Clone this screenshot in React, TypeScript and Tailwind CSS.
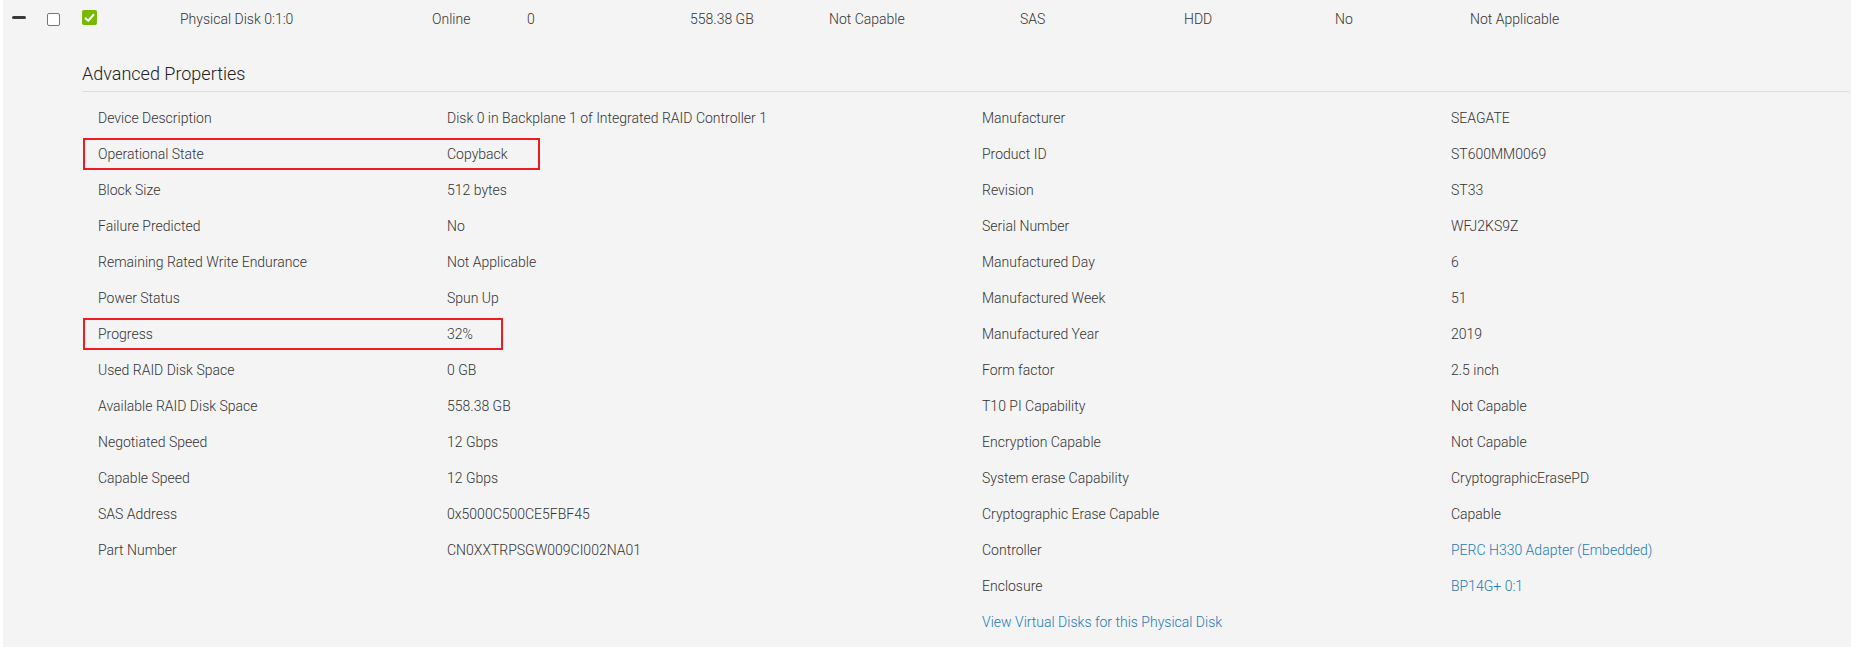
const leftRows = [
  ['Device Description', 'Disk 0 in Backplane 1 of Integrated RAID Controller 1'],
  ['Operational State', 'Copyback'],
  ['Block Size', '512 bytes'],
  ['Failure Predicted', 'No'],
  ['Remaining Rated Write Endurance', 'Not Applicable'],
  ['Power Status', 'Spun Up'],
  ['Progress', '32%'],
  ['Used RAID Disk Space', '0 GB'],
  ['Available RAID Disk Space', '558.38 GB'],
  ['Negotiated Speed', '12 Gbps'],
  ['Capable Speed', '12 Gbps'],
  ['SAS Address', '0x5000C500CE5FBF45'],
  ['Part Number', 'CN0XXTRPSGW009CI002NA01'],
];

const rightRows = [
  ['Manufacturer', 'SEAGATE'],
  ['Product ID', 'ST600MM0069'],
  ['Revision', 'ST33'],
  ['Serial Number', 'WFJ2KS9Z'],
  ['Manufactured Day', '6'],
  ['Manufactured Week', '51'],
  ['Manufactured Year', '2019'],
  ['Form factor', '2.5 inch'],
  ['T10 PI Capability', 'Not Capable'],
  ['Encryption Capable', 'Not Capable'],
  ['System erase Capability', 'CryptographicErasePD'],
  ['Cryptographic Erase Capable', 'Capable'],
];

function Row({ label, value, link, labelClass, boxClass }: { label: string; value?: string; link?: boolean; labelClass: string; boxClass?: string }) {
  return (
    <div className="relative flex h-9 items-center">
      <div className={`shrink-0 pl-4 ${labelClass}`}>{label}</div>
      <div className={link ? 'text-[#1f7ab8]' : ''}>{value}</div>
      {boxClass && <div className={`absolute top-[2px] left-[1px] h-[32px] border-2 border-[#ed1c24] ${boxClass}`} />}
    </div>
  );
}

export default function App() {
  return (
    <div className="h-[647px] w-[1851px] overflow-hidden bg-white pl-[3px] font-['Roboto',sans-serif] text-[14px] font-light text-[#333333]">
      <div className="h-full bg-[#f4f4f4]">
        <div className="flex h-[38px] items-center">
          <div className="mb-[3px] ml-[9px] h-[3px] w-[14px] rounded-sm bg-[#3a3a3a]" />
          <div className="ml-[21px] h-[13px] w-[13px] rounded-[2px] border border-[#777777] bg-white" />
          <div className="mb-[3px] ml-[22px] flex h-[15px] w-[15px] items-center justify-center rounded-[2px] bg-[#76b900]">
            <svg viewBox="0 0 16 16" className="h-[13px] w-[13px]" fill="none" stroke="white" strokeWidth="2.6">
              <path d="M2.5 8.5 6.5 12 13.5 4" />
            </svg>
          </div>
          <div className="ml-[83px] w-[252px]">Physical Disk 0:1:0</div>
          <div className="w-[95px]">Online</div>
          <div className="w-[163px]">0</div>
          <div className="w-[139px]">558.38 GB</div>
          <div className="w-[191px]">Not Capable</div>
          <div className="w-[164px]">SAS</div>
          <div className="w-[151px]">HDD</div>
          <div className="w-[135px]">No</div>
          <div>Not Applicable</div>
        </div>
        <div className="mt-[23px] ml-[79px] mr-[2px]">
          <div className="border-b border-[#dddddd] pb-[4px] text-[18px] leading-[26px] text-[#222222]">Advanced Properties</div>
          <div className="mt-[8px] flex">
            <div className="w-[884px]">
              {leftRows.map(([label, value]) => (
                <Row
                  key={label}
                  label={label}
                  value={value}
                  labelClass="w-[365px]"
                  boxClass={label === 'Operational State' ? 'w-[457px]' : label === 'Progress' ? 'w-[420px]' : undefined}
                />
              ))}
            </div>
            <div className="flex-1">
              {rightRows.map(([label, value]) => (
                <Row key={label} label={label} value={value} labelClass="w-[485px]" />
              ))}
              <Row label="Controller" value="PERC H330 Adapter (Embedded)" link labelClass="w-[485px]" />
              <Row label="Enclosure" value="BP14G+ 0:1" link labelClass="w-[485px]" />
              <div className="flex h-9 items-center pl-4 text-[#1f7ab8]">View Virtual Disks for this Physical Disk</div>
            </div>
          </div>
        </div>
      </div>
    </div>
  );
}
